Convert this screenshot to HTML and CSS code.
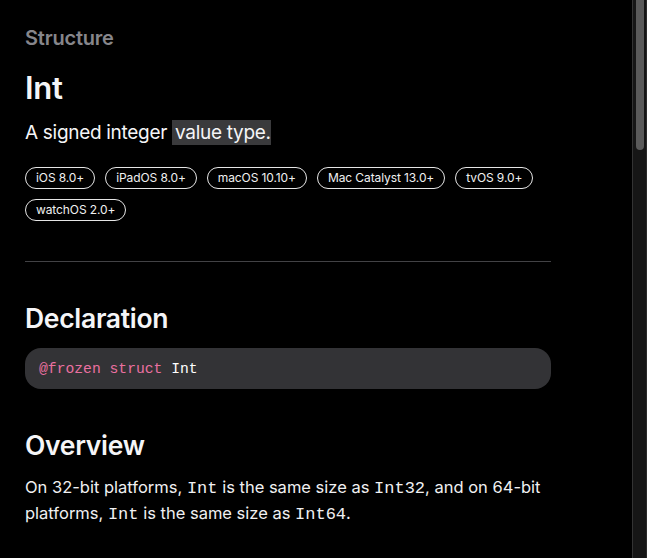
FILE: index.html
```html
<!DOCTYPE html>
<html lang="en">
<head>
<meta charset="utf-8">
<title>Int</title>
<link rel="stylesheet" href="styles.css">
</head>
<body>
<div class="window">
  <main class="content">
    <div class="eyebrow">Structure</div>
    <h1 class="title">Int</h1>
    <p class="abstract">A signed integer <span class="hl">value type.</span></p>
    <ul class="platforms">
      <li class="pill">iOS 8.0+</li>
      <li class="pill">iPadOS 8.0+</li>
      <li class="pill">macOS 10.10+</li>
      <li class="pill">Mac Catalyst 13.0+</li>
      <li class="pill">tvOS 9.0+</li>
      <li class="pill">watchOS 2.0+</li>
    </ul>
    <hr class="divider">
    <h2 class="section-title">Declaration</h2>
    <div class="code"><span class="kw">@frozen struct</span> Int</div>
    <h2 class="section-title overview">Overview</h2>
    <p class="body"><span class="line">On 32-bit platforms, <code>Int</code> is the same size as <code>Int32</code>, and on 64-bit</span><br><span class="line">platforms, <code>Int</code> is the same size as <code>Int64</code>.</span></p>
  </main>
  <aside class="scrollbar"><div class="thumb"></div></aside>
</div>
</body>
</html>
```
FILE: styles.css
```css
* { box-sizing: border-box; }
html, body { margin: 0; padding: 0; background: #000; height: 100%; overflow: hidden; }
body { font-family: Inter, "Noto Sans", sans-serif; color: #f5f5f7; }
.window { display: flex; height: 558px; }
.content { width: 632px; padding: 26px 0 0 25px; flex: none; }
.content > * { width: 526px; }
.eyebrow { font-size: 20px; font-weight: 600; color: #86868b; line-height: 24px; margin: 0; letter-spacing: -0.2px; }
.title { font-size: 31px; font-weight: 600; line-height: 38px; margin: 19px 0 0; letter-spacing: -0.3px; }
.abstract { font-size: 19px; line-height: 26px; margin: 13px 0 0; letter-spacing: -0.3px; }
.hl { background: #3a3a3c; padding: 1px 0 1px 3px; }
.platforms { list-style: none; margin: 21px 0 0; padding: 0; display: flex; flex-wrap: wrap; gap: 10px 10px; }
.pill { border: 1px solid #e6e6e6; border-radius: 11px; font-size: 12px; line-height: 20px; padding: 0 10px; color: #f0f0f0; letter-spacing: -0.1px; }
.divider { border: 0; border-top: 1px solid #424245; margin: 40px 0 0; height: 0; }
.section-title { font-size: 26.5px; font-weight: 600; line-height: 34px; margin: 39px 0 0; letter-spacing: -0.3px; }
.code { margin-top: 13px; background: #333336; border-radius: 16px; height: 41px; padding: 0 14px; display: flex; align-items: center; font-family: "Liberation Mono", "DejaVu Sans Mono", monospace; font-size: 14.7px; color: #fff; white-space: pre; }
.kw { color: #ea70a0; }
.overview { margin-top: 39px; }
.body { font-size: 16.5px; line-height: 25px; margin: 13px 0 0; color: #f0f0f2; white-space: nowrap; }
.body code { font-family: "Liberation Mono", "DejaVu Sans Mono", monospace; font-size: 17px; }
.scrollbar { width: 15px; flex: none; background: #161616; border-left: 1px solid #333; border-right: 1px solid #2a2a2a; }
.thumb { width: 8px; height: 150px; margin-left: 3px; background: #5a5a5a; border-radius: 0 0 4px 4px; }
```
